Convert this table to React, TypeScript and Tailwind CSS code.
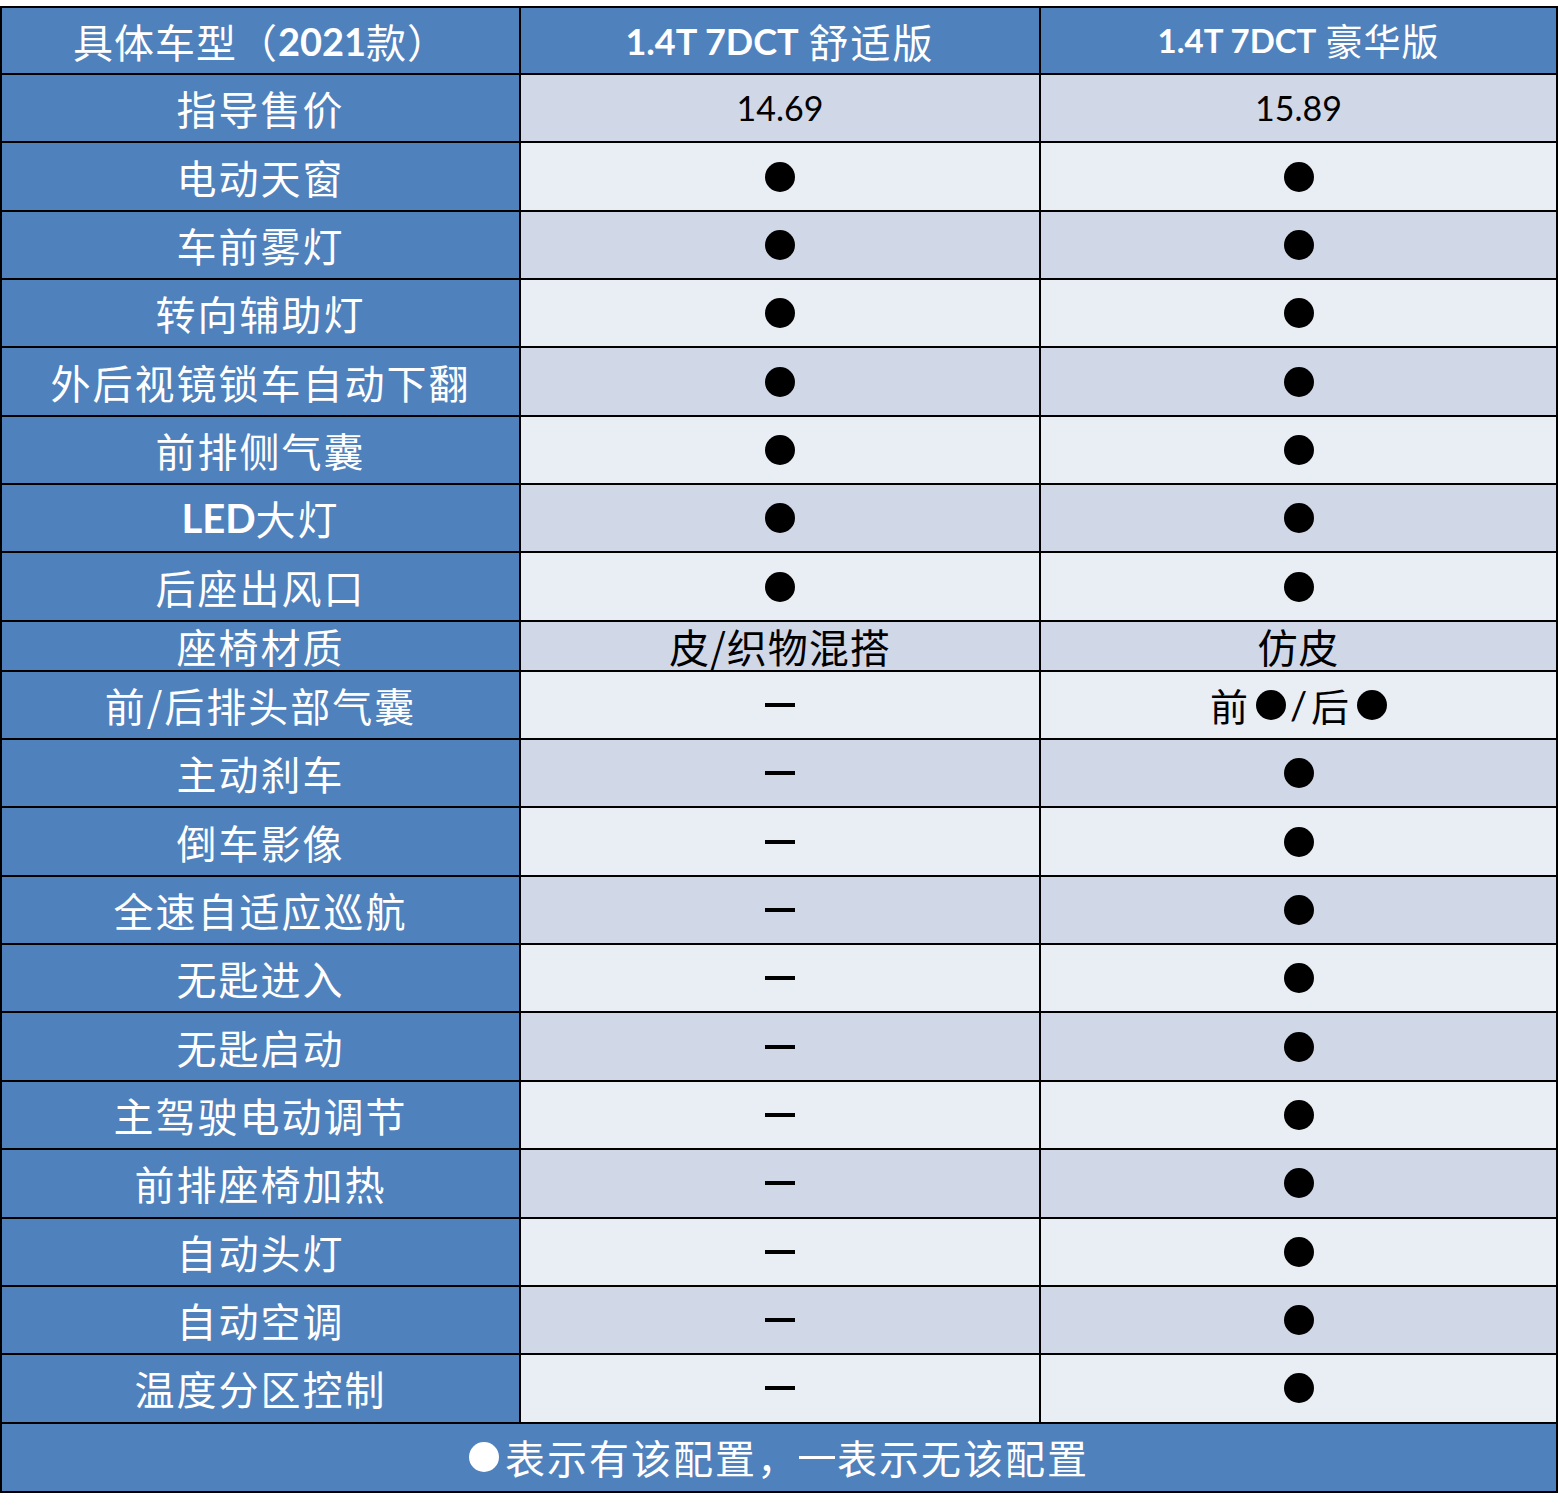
import React from 'react';

type Cell = 'dot' | 'dash' | string;

interface Row {
  label: React.ReactNode;
  a: Cell;
  b: Cell;
  short?: boolean;
}

const cjk = "font-['Noto_Sans_CJK_SC',sans-serif]";
const latin = "font-['Lato','Noto_Sans_CJK_SC',sans-serif]";

const rows: Row[] = [
  { label: '指导售价', a: '14.69', b: '15.89' },
  { label: '电动天窗', a: 'dot', b: 'dot' },
  { label: '车前雾灯', a: 'dot', b: 'dot' },
  { label: '转向辅助灯', a: 'dot', b: 'dot' },
  { label: '外后视镜锁车自动下翻', a: 'dot', b: 'dot' },
  { label: '前排侧气囊', a: 'dot', b: 'dot' },
  {
    label: (
      <>
        <span className={`${latin} font-bold tracking-normal`}>LED</span>大灯
      </>
    ),
    a: 'dot',
    b: 'dot',
  },
  { label: '后座出风口', a: 'dot', b: 'dot' },
  { label: '座椅材质', a: '皮/织物混搭', b: '仿皮', short: true },
  { label: '前/后排头部气囊', a: 'dash', b: 'mixed' },
  { label: '主动刹车', a: 'dash', b: 'dot' },
  { label: '倒车影像', a: 'dash', b: 'dot' },
  { label: '全速自适应巡航', a: 'dash', b: 'dot' },
  { label: '无匙进入', a: 'dash', b: 'dot' },
  { label: '无匙启动', a: 'dash', b: 'dot' },
  { label: '主驾驶电动调节', a: 'dash', b: 'dot' },
  { label: '前排座椅加热', a: 'dash', b: 'dot' },
  { label: '自动头灯', a: 'dash', b: 'dot' },
  { label: '自动空调', a: 'dash', b: 'dot' },
  { label: '温度分区控制', a: 'dash', b: 'dot' },
];

function Dot({ white = false }: { white?: boolean }) {
  return (
    <span
      className={`inline-block w-[30px] h-[30px] rounded-full ${white ? 'bg-white' : 'bg-black'}`}
    />
  );
}

function Value({ v }: { v: Cell }) {
  if (v === 'dot') return <Dot />;
  if (v === 'dash') return <span className="block w-[30px] h-[4px] bg-black" />;
  if (v === 'mixed')
    return (
      <span className={`${cjk} text-[38px] leading-none text-black flex items-center gap-[8px]`}>
        前<Dot />
        <span className={`${latin} -mx-[4px]`}>/</span>后<Dot />
      </span>
    );
  if (/^[\d.]+$/.test(v))
    return <span className={`${latin} text-[34px] text-black leading-none`}>{v}</span>;
  return (
    <span className={`${cjk} text-[40px] leading-none text-black tracking-[1px]`}>{v}</span>
  );
}

export default function App() {
  return (
    <div className="w-[1560px] h-[1509px] bg-white pt-[6px]">
      <div className="w-[1558px] border-2 border-b-0 border-black">
        {/* header */}
        <div className="grid grid-cols-[519px_520px_1fr] h-[67px] border-b-2 border-black bg-[#4f81bd] text-white">
          <div className={`${cjk} border-r-2 border-black flex items-center justify-center text-[40px] leading-none tracking-[1px]`}>
            具体车型（<span className={`${latin} font-bold tracking-normal text-[38px]`}>2021</span>款）
          </div>
          <div className="border-r-2 border-black flex items-center justify-center">
            <span className={`${latin} font-bold text-[36px] leading-none`}>1.4T 7DCT</span>
            <span className={`${cjk} text-[40px] leading-none tracking-[2px] ml-[10px]`}>舒适版</span>
          </div>
          <div className="flex items-center justify-center">
            <span className={`${latin} font-bold text-[33px] leading-none`}>1.4T 7DCT</span>
            <span className={`${cjk} text-[37px] leading-none tracking-[1px] ml-[9px]`}>豪华版</span>
          </div>
        </div>

        {rows.map((r, i) => (
          <div
            key={i}
            className={`grid grid-cols-[519px_520px_1fr] border-b-2 border-black ${
              r.short ? 'h-[50px]' : 'h-[68.35px]'
            } ${i % 2 === 0 ? 'bg-[#d0d8e8]' : 'bg-[#e9edf4]'}`}
          >
            <div
              className={`${cjk} bg-[#4f81bd] text-white border-r-2 border-black flex items-center justify-center text-[40px] leading-none tracking-[2px]`}
            >
              {r.label}
            </div>
            <div className="border-r-2 border-black flex items-center justify-center">
              <Value v={r.a} />
            </div>
            <div className="flex items-center justify-center">
              <Value v={r.b} />
            </div>
          </div>
        ))}

        {/* legend */}
        <div
          className={`${cjk} h-[69px] bg-[#4f81bd] border-b-2 border-black flex items-center justify-center text-white text-[40px] leading-none tracking-[2px]`}
        >
          <Dot white />
          <span className="ml-[6px]">表示有该配置，</span>
          <span className="inline-block w-[36px] h-[3px] bg-white mr-[2px]" />
          <span>表示无该配置</span>
        </div>
      </div>
    </div>
  );
}
